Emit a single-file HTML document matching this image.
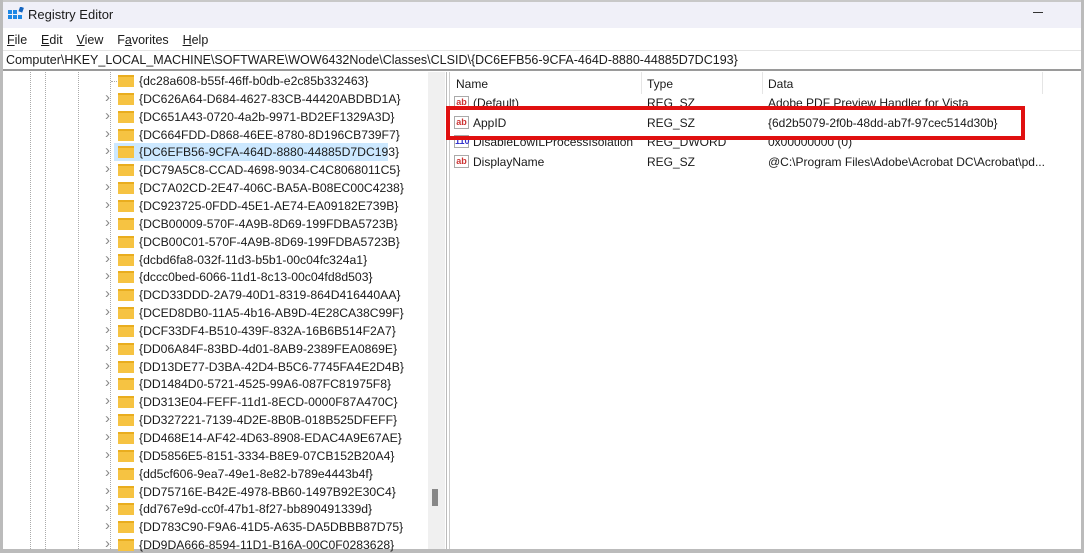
<!DOCTYPE html>
<html><head><style>
*{margin:0;padding:0;box-sizing:border-box}
body{width:1084px;height:553px;overflow:hidden;background:#fff;font-family:"Liberation Sans",sans-serif;font-size:12px;color:#1a1a1a;position:relative}
.a{position:absolute;white-space:nowrap}
.row{position:absolute;left:0;height:18px;line-height:18px;font-size:12.2px}
.fold{position:absolute;left:118px;top:3px;width:16px;height:12px;background:#f6c342;border-top:2px solid #e9ad1f}
.chev{position:absolute;left:105px;top:-1px;color:#888;font-size:15px}
.t{position:absolute;left:139px}
.dl{position:absolute;top:72px;height:477px;border-left:1px dotted #aaa}
.ab{position:absolute;left:454px;width:15px;height:13px;border:1px solid #aaa;background:#fff;font-size:9px;line-height:11px;color:#c33;font-weight:bold;text-align:center}
</style></head><body>
<div class="a" style="left:0;top:0;width:1084px;height:28px;background:#f0f0f8;border-top:2px solid #c8c8c8"></div>
<div class="a" style="left:8px;top:7px;width:16px;height:15px">
<svg width="16" height="15"><rect x="0" y="3" width="4" height="4" fill="#1e88e5"/><rect x="5" y="3" width="4" height="4" fill="#1e88e5"/><rect x="0" y="8" width="4" height="4" fill="#1e88e5"/><rect x="5" y="8" width="4" height="4" fill="#1e88e5"/><rect x="10" y="8" width="4" height="4" fill="#1e88e5"/><rect x="11" y="0" width="4" height="5" fill="#1565c0" transform="rotate(20 13 3)"/></svg></div>
<div class="a" style="left:28px;top:7px;font-size:13px">Registry Editor</div>
<div class="a" style="left:1033px;top:12px;width:10px;border-top:1px solid #333"></div>
<div class="a" style="left:7px;top:33px;font-size:12.5px"><u>F</u>ile&nbsp;&nbsp;&nbsp; <u>E</u>dit&nbsp;&nbsp;&nbsp; <u>V</u>iew&nbsp;&nbsp;&nbsp; F<u>a</u>vorites&nbsp;&nbsp;&nbsp; <u>H</u>elp</div>
<div class="a" style="left:0;top:50px;width:1084px;height:21px;border-top:1px solid #e4e4e4;border-bottom:2px solid #9a9a9a"></div>
<div class="a" style="left:6px;top:53px;font-size:12.5px">Computer\HKEY_LOCAL_MACHINE\SOFTWARE\WOW6432Node\Classes\CLSID\{DC6EFB56-9CFA-464D-8880-44885D7DC193}</div>
<div class="a" style="left:0;top:0;width:3px;height:553px;background:#bbb"></div>
<div class="a" style="left:1081px;top:0;width:3px;height:553px;background:#bbb"></div>
<div class="a" style="left:0;top:549px;width:1084px;height:4px;background:#bbb"></div>
<div class="dl" style="left:30px"></div><div class="dl" style="left:45px"></div><div class="dl" style="left:78px"></div><div class="dl" style="left:110px"></div>
<div id="tree"></div>
<div class="a" style="left:428px;top:72px;width:17px;height:477px;background:#f0f0f0"></div>
<div class="a" style="left:432px;top:489px;width:6px;height:17px;background:#888"></div>
<div class="a" style="left:446px;top:72px;width:1px;height:477px;background:#bbb"></div>
<div class="a" style="left:449px;top:72px;width:1px;height:477px;background:#ccc"></div>
<div class="a" style="left:456px;top:77px">Name</div>
<div class="a" style="left:647px;top:77px">Type</div>
<div class="a" style="left:768px;top:77px">Data</div>
<div class="a" style="left:641px;top:72px;width:1px;height:22px;background:#e5e5e5"></div>
<div class="a" style="left:762px;top:72px;width:1px;height:22px;background:#e5e5e5"></div>
<div class="a" style="left:1042px;top:72px;width:1px;height:22px;background:#e5e5e5"></div>
<div class="ab" style="top:96px">ab</div><div class="a" style="left:473px;top:96px">(Default)</div><div class="a" style="left:647px;top:96px">REG_SZ</div><div class="a" style="left:768px;top:96px">Adobe PDF Preview Handler for Vista</div>
<div class="ab" style="top:116px">ab</div><div class="a" style="left:473px;top:116px">AppID</div><div class="a" style="left:647px;top:116px">REG_SZ</div><div class="a" style="left:768px;top:116px">{6d2b5079-2f0b-48dd-ab7f-97cec514d30b}</div>
<div class="ab" style="top:135px;color:#33c">110</div><div class="a" style="left:473px;top:135px">DisableLowILProcessIsolation</div><div class="a" style="left:647px;top:135px">REG_DWORD</div><div class="a" style="left:768px;top:135px">0x00000000 (0)</div>
<div class="ab" style="top:155px">ab</div><div class="a" style="left:473px;top:155px">DisplayName</div><div class="a" style="left:647px;top:155px">REG_SZ</div><div class="a" style="left:768px;top:155px">@C:\Program Files\Adobe\Acrobat DC\Acrobat\pd...</div>
<div class="a" style="left:446px;top:106px;width:579px;height:34px;border:4px solid #e01010"></div>
<script>
var k=["{dc28a608-b55f-46ff-b0db-e2c85b332463}","{DC626A64-D684-4627-83CB-44420ABDBD1A}","{DC651A43-0720-4a2b-9971-BD2EF1329A3D}","{DC664FDD-D868-46EE-8780-8D196CB739F7}","{DC6EFB56-9CFA-464D-8880-44885D7DC193}","{DC79A5C8-CCAD-4698-9034-C4C8068011C5}","{DC7A02CD-2E47-406C-BA5A-B08EC00C4238}","{DC923725-0FDD-45E1-AE74-EA09182E739B}","{DCB00009-570F-4A9B-8D69-199FDBA5723B}","{DCB00C01-570F-4A9B-8D69-199FDBA5723B}","{dcbd6fa8-032f-11d3-b5b1-00c04fc324a1}","{dccc0bed-6066-11d1-8c13-00c04fd8d503}","{DCD33DDD-2A79-40D1-8319-864D416440AA}","{DCED8DB0-11A5-4b16-AB9D-4E28CA38C99F}","{DCF33DF4-B510-439F-832A-16B6B514F2A7}","{DD06A84F-83BD-4d01-8AB9-2389FEA0869E}","{DD13DE77-D3BA-42D4-B5C6-7745FA4E2D4B}","{DD1484D0-5721-4525-99A6-087FC81975F8}","{DD313E04-FEFF-11d1-8ECD-0000F87A470C}","{DD327221-7139-4D2E-8B0B-018B525DFEFF}","{DD468E14-AF42-4D63-8908-EDAC4A9E67AE}","{DD5856E5-8151-3334-B8E9-07CB152B20A4}","{dd5cf606-9ea7-49e1-8e82-b789e4443b4f}","{DD75716E-B42E-4978-BB60-1497B92E30C4}","{dd767e9d-cc0f-47b1-8f27-bb890491339d}","{DD783C90-F9A6-41D5-A635-DA5DBBB87D75}","{DD9DA666-8594-11D1-B16A-00C0F0283628}"];
var h="";k.forEach(function(s,i){var y=72+i*17.85;
h+='<div class="row" style="top:'+y+'px;width:428px">'+(i==4?'<div style="position:absolute;left:114px;top:0;width:274px;height:18px;background:#cce8ff"></div>':'')+(i==0?'<div style="position:absolute;left:111px;top:9px;width:6px;border-top:1px dotted #aaa"></div>':'<span class="chev">&#x203A;</span>')+'<div class="fold"></div><span class="t">'+s+'</span></div>';});
document.getElementById("tree").innerHTML=h;
</script>
</body></html>
